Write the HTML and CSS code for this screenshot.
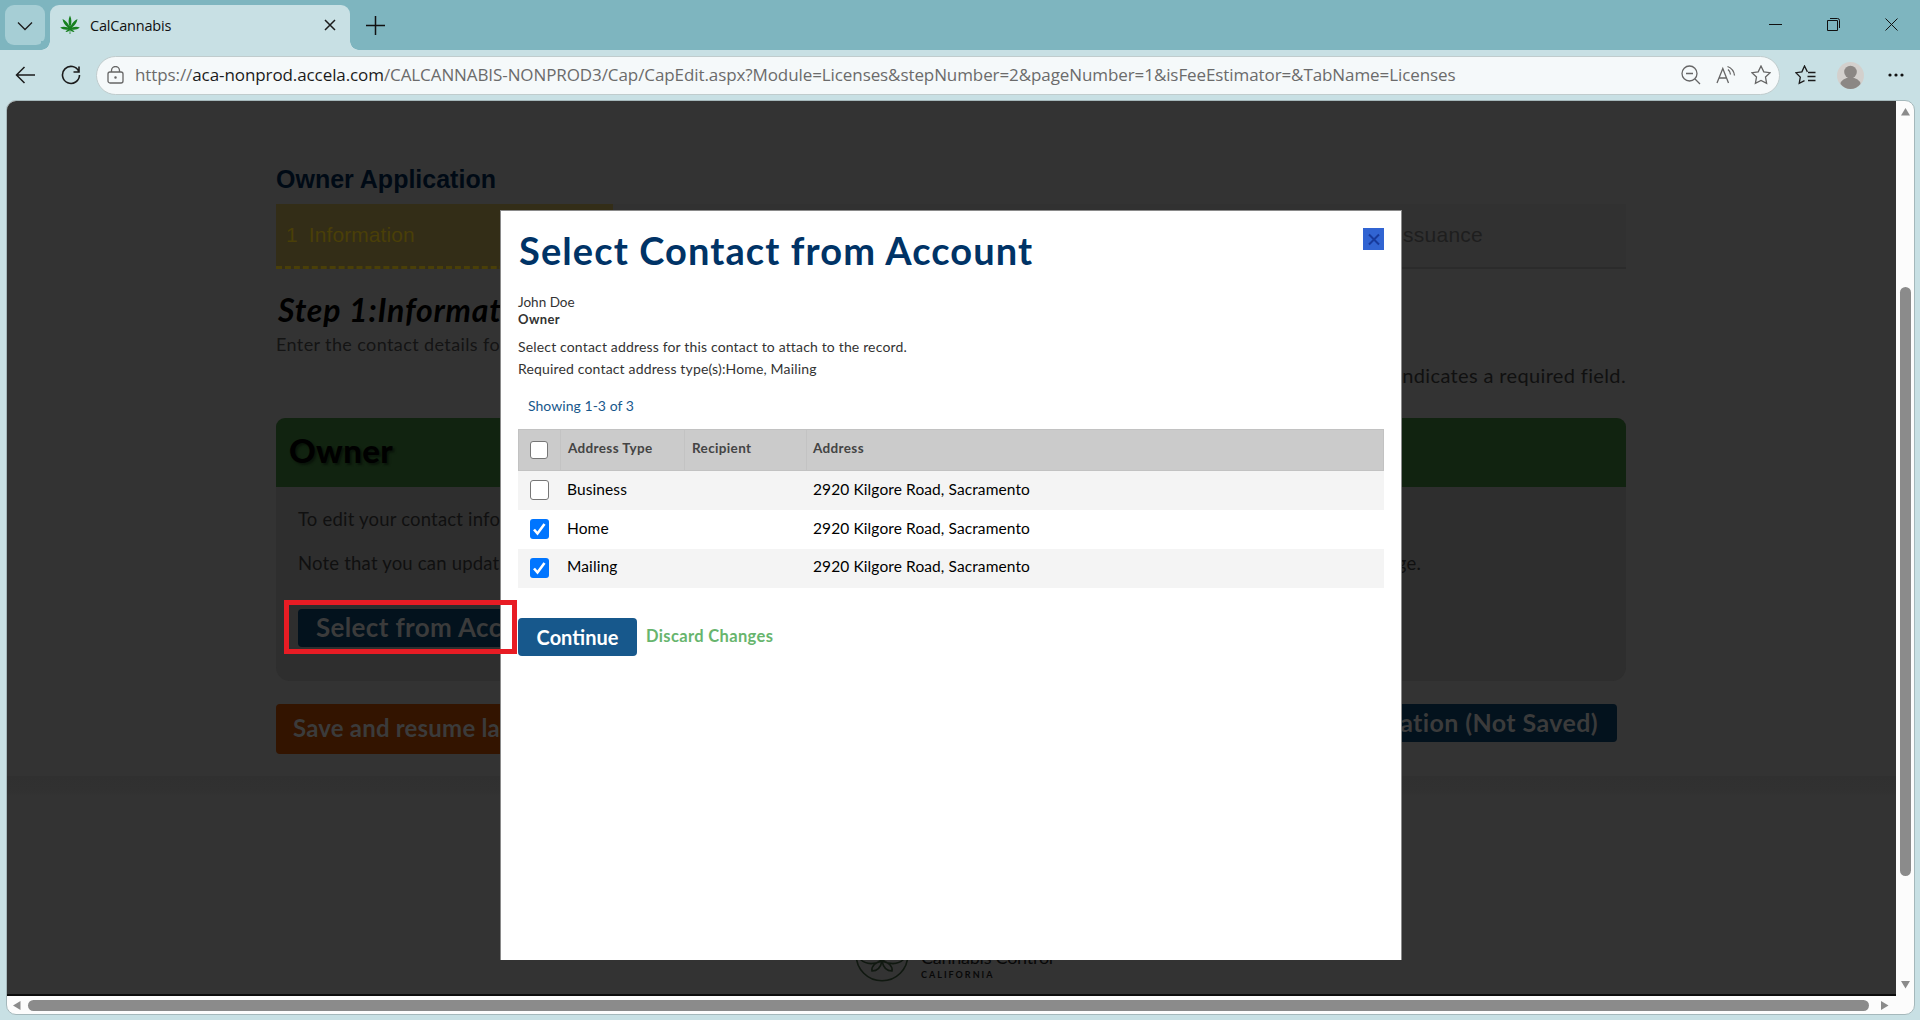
FILE: index.html
```
<!DOCTYPE html>
<html lang="en">
<head>
<meta charset="utf-8">
<title>CalCannabis</title>
<link rel="stylesheet" href="styles.css">
</head>
<body>
<div class="tabstrip">
  <div class="tab-menu"><svg width="16" height="10" viewBox="0 0 16 10"><path d="M1 1.5l7 7 7-7" /></svg></div>
  <div class="tab">
    <svg class="leaf" width="20" height="20" viewBox="0 0 20 20"><path d="M10 0.5C11.8 4 11.8 8 10.5 11.500C12 8 14.500 5.500 17.500 4C17 7.500 15 10.500 12 12.500C14.500 11.500 17.500 11.300 19.800 12.500C17.500 14.500 14.500 15 11.500 14.500C13 15 14 15.800 14.500 17C12.800 17.200 11.300 16.500 10.300 15.300L10.400 19H9.600L9.700 15.300C8.700 16.500 7.200 17.200 5.500 17C6 15.800 7 15 8.500 14.500C5.500 15 2.500 14.500.2 12.500C2.500 11.300 5.500 11.500 8 12.500C5 10.500 3 7.500 2.500 4C5.500 5.500 8 8 9.500 11.500C8.200 8 8.200 4 10 .5Z"/></svg>
    <span class="tab-title">CalCannabis</span>
    <svg class="tab-close" width="12" height="12" viewBox="0 0 12 12"><path d="M1 1l10 10M11 1L1 11"/></svg>
  </div>
  <svg class="plus" width="19" height="19" viewBox="0 0 19 19"><path d="M9.500 0v19M0 9.500h19"/></svg>
  <div class="window-controls">
    <svg width="13" height="13" viewBox="0 0 13 13"><path d="M0 6.500h13"/></svg>
    <svg width="13" height="13" viewBox="0 0 13 13"><path d="M.5 2.500h10v10H.5zM3 .5h7.500a2 2 0 0 1 2 2V10"/></svg>
    <svg width="13" height="13" viewBox="0 0 13 13"><path d="M.5.500l12 12M12.500.500l-12 12"/></svg>
  </div>
</div>
<div class="toolbar">
  <svg class="back" width="20" height="18" viewBox="0 0 20 18"><path d="M9.500 1L1.500 9l8 8M1.500 9H20"/></svg>
  <svg class="reload" width="20" height="20" viewBox="0 0 20 20"><path d="M17.800 6.500A8.500 8.500 0 1 0 18.500 10M18 1.500v5.500h-5.500"/></svg>
  <div class="address">
    <svg class="lock" width="17" height="18" viewBox="0 0 17 18"><rect x="1" y="6" width="15" height="11" rx="2"/><path d="M4.500 6V4.500a4 4 0 0 1 8 0V6"/><circle cx="8.500" cy="11.500" r=".6"/></svg>
    <span class="url">https://<b>aca-nonprod.accela.com</b>/CALCANNABIS-NONPROD3/Cap/CapEdit.aspx?Module=Licenses&amp;stepNumber=2&amp;pageNumber=1&amp;isFeeEstimator=&amp;TabName=Licenses</span>
    <div class="address-icons">
      <svg width="20" height="20" viewBox="0 0 20 20"><circle cx="8.500" cy="8.500" r="7.500"/><path d="M14 14l5 5M5 8.500h7"/></svg>
      <svg width="20" height="20" viewBox="0 0 20 20"><path d="M1 18L6.800 3.500 12.500 18M3 13h7.600M12 4.500q2.500 2 2.500 5M11.500 1.500c4 1.500 6.500 4.500 7 9"/></svg>
      <svg width="20" height="20" viewBox="0 0 20 20"><path d="M10 1l2.800 5.800 6.300.9-4.600 4.400 1.100 6.300L10 15.500l-5.600 2.900 1.100-6.300L.9 7.700l6.300-.9z"/></svg>
    </div>
  </div>
  <svg class="favorites" width="21" height="20" viewBox="0 0 21 20"><path d="M9.500 15.700l-5.300 2.700 1.100-6.300L.9 7.700l6-.9L9.500 1l2.900 5.900M13 7.500h7.500M12.500 11.500h8M13 15.500h7.500"/></svg>
  <svg class="avatar" width="27" height="27" viewBox="0 0 27 27"><circle cx="13.500" cy="13.500" r="13.500" fill="#d3d0cd"/><circle cx="13.500" cy="10" r="6.300" fill="#8b8784"/><path d="M3.500 22a10 6.500 0 0 1 20 0q-4 5-10 5t-10-5z" fill="#8b8784"/></svg>
  <svg class="dots" width="16" height="4" viewBox="0 0 16 4"><circle cx="2" cy="2" r="1.600"/><circle cx="8" cy="2" r="1.600"/><circle cx="14" cy="2" r="1.600"/></svg>
</div>
<div class="viewport">
  <div class="row">
    <main class="page">
      <div class="content">
        <h2 class="app-title">Owner Application</h2>
        <div class="steps">
          <div class="step active"><span>1</span><span>Information</span></div>
          <div class="step last"><span>Issuance</span></div>
        </div>
        <h1 class="step-title">Step 1:Informat</h1>
        <p class="lead">Enter the contact details fo</p>
        <p class="required">ndicates a required field.</p>
        <section class="owner">
          <h2 class="owner-head">Owner</h2>
          <div class="owner-body">
            <p class="edit">To edit your contact info</p>
            <p class="note"><span>Note that you can updat</span><span class="note-end">ge.</span></p>
            <a class="btn select">Select from Acc</a>
          </div>
        </section>
        <div class="actions">
          <a class="btn save">Save and resume la</a>
          <a class="btn next">ation (Not Saved)</a>
        </div>
      </div>
      <footer class="footer">
        <svg class="seal" width="54" height="54" viewBox="0 0 54 54"><circle cx="27" cy="27" r="25.800"/><path d="M27 33C18 28 10 27 5 31c6 6 15 5 22 2M27 33c9-5 17-6 22-2-6 6-15 5-22 2M27 33c-6 1-11 5-10 10 6 0 9-5 10-10M27 33c6 1 11 5 10 10-6 0-9-5-10-10M27 33C18 22 22 10 27 5c5 5 9 17 0 28"/></svg>
        <div class="brand"><span class="brand-name">Cannabis Control</span><span class="brand-state">CALIFORNIA</span></div>
      </footer>
      <div class="dialog">
        <svg class="dialog-close" width="21" height="22" viewBox="0 0 21 22"><rect width="21" height="22" fill="#3164d2" stroke="none"/><path d="M6 6.500l10 10M16 6.500l-10 10"/></svg>
        <h1 class="dialog-title">Select Contact from Account</h1>
        <p class="person">John Doe</p>
        <p class="role"><span>Owner</span></p>
        <p class="hint">Select contact address for this contact to attach to the record.</p>
        <p class="hint">Required contact address type(s):Home, Mailing</p>
        <p class="count">Showing 1-3 of 3</p>
        <div class="grid">
          <div class="tr th"><div><i class="box small"></i></div><div>Address Type</div><div>Recipient</div><div>Address</div></div>
          <div class="tr odd"><div><i class="box"></i></div><div>Business</div><div></div><div>2920 Kilgore Road, Sacramento</div></div>
          <div class="tr"><div><i class="box on"><svg width="19" height="20" viewBox="0 0 19 20"><path d="M4 10.500l3.500 4L14.500 5"/></svg></i></div><div>Home</div><div></div><div>2920 Kilgore Road, Sacramento</div></div>
          <div class="tr odd last-row"><div><i class="box on"><svg width="19" height="20" viewBox="0 0 19 20"><path d="M4 10.500l3.500 4L14.500 5"/></svg></i></div><div>Mailing</div><div></div><div>2920 Kilgore Road, Sacramento</div></div>
        </div>
        <div class="dialog-actions"><a class="continue">Continue</a><a class="discard">Discard Changes</a></div>
      </div>
      <div class="highlight"></div>
    </main>
    <div class="vscroll"><svg width="9" height="8" viewBox="0 0 9 8"><path d="M4.500 0L9 7.500H0z"/></svg><div class="vthumb"></div><svg width="9" height="8" viewBox="0 0 9 8"><path d="M4.500 7.500L9 0H0z"/></svg></div>
  </div>
  <div class="hscroll"><svg width="8" height="9" viewBox="0 0 8 9"><path d="M0 4.500L7.500 0v9z"/></svg><div class="hthumb"></div><svg width="8" height="9" viewBox="0 0 8 9"><path d="M7.500 4.500L0 0v9z"/></svg></div>
</div>
</body>
</html>
```

FILE: styles.css
```
* { box-sizing: border-box; }
body {
  margin: 0;
  width: 1920px;
  height: 1020px;
  overflow: hidden;
  display: flex;
  flex-direction: column;
  background: #c8e0e4;
  font-family: Lato, "Liberation Sans", sans-serif;
  color: #333;
}
h1, h2, p { margin: 0; white-space: nowrap; }
svg { display: block; flex: none; fill: none; stroke: #1b1b1b; stroke-width: 1.3; }
i { font-style: normal; }
span { white-space: nowrap; }

/* Browser chrome */
.tabstrip { height: 50px; flex: none; display: flex; align-items: flex-start; background: #7eb5bf; padding: 5px 0 0 5px; }
.tab-menu { width: 40px; height: 40px; border-radius: 9px; background: #a6ced5; display: flex; align-items: center; justify-content: center; padding-top: 2px; margin-right: 5px; }
.tab { position: relative; width: 300px; height: 45px; border-radius: 9px 9px 0 0; background: #c8e0e4; display: flex; align-items: center; padding: 0 14px 5px 10px; }
.tab::before, .tab::after { content: ""; position: absolute; bottom: 0; width: 9px; height: 9px; }
.tab::before { left: -9px; background: radial-gradient(circle at 0 0, #7eb5bf 8.5px, #c8e0e4 9px); }
.tab::after { right: -9px; background: radial-gradient(circle at 100% 0, #7eb5bf 8.5px, #c8e0e4 9px); }
.leaf { fill: #17801f; stroke: none; }
.tab-title { font: 14.5px/20px "Open Sans", sans-serif; letter-spacing: -.2px; color: #111; margin: 1px 0 0 10px; }
.tab-close { margin-left: auto; stroke-width: 1.5; }
.plus { margin: 11px 0 0 16px; stroke-width: 1.5; stroke: #111; }
.window-controls { margin-left: auto; display: flex; gap: 45px; padding: 13px 22px 0 0; }
.window-controls svg { stroke: #111; stroke-width: 1; }
.toolbar { height: 50px; flex: none; display: flex; align-items: center; padding: 0 16px 0 15px; }
.back { stroke-width: 1.5; }
.reload { margin-left: 26px; stroke-width: 1.6; }
.address { width: 1686px; height: 39px; margin-left: 15px; border: 1px solid #c0cccd; border-radius: 20px; background: #f5f9fa; display: flex; align-items: center; padding: 0 8px 0 10px; }
.address svg { stroke: #666; }
.url { font: 17px/24px "Open Sans", sans-serif; letter-spacing: -.09px; color: #6b6b6b; margin: 0 0 1px 11px; }
.url b { font-weight: 400; color: #1b1b1b; }
.address-icons { margin-left: auto; display: flex; gap: 15px; }
.favorites { margin-left: 15px; }
.avatar { margin-left: 21px; stroke: none; }
.dots { margin-left: 24px; fill: #111; stroke: none; }

/* Scrolling viewport */
.viewport { width: 1909px; height: 915px; flex: none; margin-left: 6px; border: 1px solid #a5b8bb; border-radius: 10px; overflow: hidden; background: #fcfcfc; display: flex; flex-direction: column; }
.row { display: flex; height: 895px; flex: none; }
.page { position: relative; width: 1889px; flex: none; background: #333; border-bottom: 2px solid #0c0c0c; overflow: hidden; }
.vscroll { flex: 1; display: flex; flex-direction: column; align-items: center; padding-top: 7px; }
.vscroll svg, .hscroll svg { fill: #8b8b8b; stroke: none; }
.vthumb { width: 11px; height: 589px; margin: 171px 0 105px; border-radius: 6px; background: #8b8b8b; }
.hscroll { display: flex; align-items: center; height: 18px; padding-left: 6px; }
.hthumb { width: 1841px; height: 11px; margin: 0 12px 0 7px; border-radius: 6px; background: #8b8b8b; }

/* Dimmed application page */
.content { width: 1350px; margin-left: 269px; padding-top: 62px; }
.app-title { font: bold 25px/32px "Liberation Sans", Arial, sans-serif; color: #000a15; }
.steps { display: flex; height: 65px; margin-top: 9px; font: 21px/61px "Liberation Sans", Arial, sans-serif; }
.step.active { width: 337px; padding-left: 10px; display: flex; gap: 11px; background: #332d17; color: #4a3f08; border-bottom: 3px dashed #4a3f08; letter-spacing: .09px; }
.step.last { flex: 1; padding-left: 784px; background: #313131; color: #1e1e1e; border-bottom: 2px solid #2b2b2b; letter-spacing: .24px; }
.step-title { font: italic 700 32px/36px Lato, sans-serif; letter-spacing: .8px; color: #000; padding-left: 2px; margin-top: 23px; }
.lead { font-size: 18px; line-height: 24px; letter-spacing: .39px; color: #141414; margin-top: 4px; }
.required { font-size: 20px; line-height: 24px; letter-spacing: .36px; color: #101010; text-align: right; margin-top: 7px; }
.owner { height: 263px; margin-top: 31px; border-radius: 9px 9px 14px 14px; overflow: hidden; background: #2e2e2e; }
.owner-head { height: 69px; background: #112310; padding-left: 13px; font-weight: 900; font-size: 33px; letter-spacing: .35px; line-height: 64px; color: #000; text-shadow: 2px 2px 2px #0a150a; }
.owner-body { padding: 20px 22px; color: #101010; font-size: 18.5px; letter-spacing: .2px; line-height: 24px; display: flex; flex-direction: column; align-items: flex-start; }
.note { margin-top: 20px; display: flex; width: 1123px; justify-content: space-between; }
.btn { display: block; border-radius: 4px; font-weight: 700; color: #3b3b3b; white-space: nowrap; }
.select { margin-top: 34px; height: 38px; width: 210px; padding-left: 18px; background: #03121d; font-size: 26px; letter-spacing: .35px; line-height: 36px; }
.actions { display: flex; justify-content: space-between; margin-top: 23px; padding-right: 9px; }
.save { height: 50px; width: 240px; padding-left: 17px; background: #331400; font-size: 24px; letter-spacing: .2px; line-height: 48px; }
.next { height: 38px; padding: 0 19px; background: #03121d; font-size: 25px; letter-spacing: .4px; line-height: 36px; }
.footer { height: 220px; margin-top: 22px; display: flex; padding: 152px 0 0 848px; background: linear-gradient(#303030, #313131 14px, #333 20px); }
.seal { stroke: #101810; stroke-width: 1.6; }
.brand { display: flex; flex-direction: column; align-items: flex-start; padding: 18px 0 0 12px; color: #080808; }
.brand-name { font-size: 18px; line-height: 22px; letter-spacing: -.25px; }
.brand-state { font-size: 9px; line-height: 14px; letter-spacing: 2px; font-weight: 700; }

/* Contact dialog */
.dialog { position: absolute; left: 493px; top: 109px; width: 902px; height: 750px; background: #fff; border: 1px solid #8a8a8a; border-bottom: 0; padding: 17px 17px 0; }
.dialog-close { position: absolute; right: 17px; top: 17px; stroke: #173a9c; stroke-width: 2; }
.dialog-title { font-size: 38px; line-height: 44px; letter-spacing: 1.1px; font-weight: 700; color: #036; padding-left: 1px; }
.person { font-size: 13.5px; line-height: 18px; margin-top: 21px; }
.role { font-size: 13px; line-height: 18px; letter-spacing: .39px; font-weight: 700; height: 14px; overflow: hidden; display: flex; align-items: center; padding-top: 1px; }
.hint { font-size: 14px; line-height: 22px; letter-spacing: .16px; }
.role + .hint { margin-top: 11px; }
.count { font-size: 14px; line-height: 20px; letter-spacing: .04px; padding-left: 10px; margin-top: 16px; color: #17588c; }
.grid { margin-top: 13px; width: 866px; }
.tr { display: grid; grid-template-columns: 42px 124px 122px 1fr; height: 39px; font-size: 15.5px; letter-spacing: .1px; color: #000; }
.tr > div { display: flex; align-items: center; padding: 0 0 3px 7px; }
.tr > div:first-child { padding: 0 0 1px 12px; }
.last-row > div { padding-bottom: 5px; }
.odd { background: #f4f4f4; }
.th { height: 42px; background: #cbcbcb; font-size: 13.5px; letter-spacing: .35px; font-weight: 700; color: #444; border: 1px solid #c2c2c2; grid-template-columns: 41px 124px 122px 1fr; }
.th > div:first-child { padding: 0 0 0 11px; }
.th > div + div { border-left: 1px solid #c3c3c3; padding: 0 0 5px 7px; }
.th > div:last-child { padding-left: 6px; }
.box { width: 19px; height: 20px; border: 1px solid #767676; border-radius: 3px; background: #fff; }
.box.small { width: 18px; height: 18px; }
.box.on { border: 0; background: #0075ff; }
.box.on svg { stroke: #fff; stroke-width: 2.6; }
.dialog-actions { display: flex; margin-top: 30px; height: 38px; line-height: 37px; font-weight: 700; }
.continue { width: 119px; text-align: center; background: #17588c; color: #fff; border-radius: 4px; font-size: 20px; line-height: 38px; }
.discard { margin-left: 9px; color: #67b56d; font-size: 16.5px; letter-spacing: .35px; line-height: 36px; }
.highlight { position: absolute; left: 277px; top: 499px; width: 233px; height: 54px; border: 5px solid #e81c24; }
```
